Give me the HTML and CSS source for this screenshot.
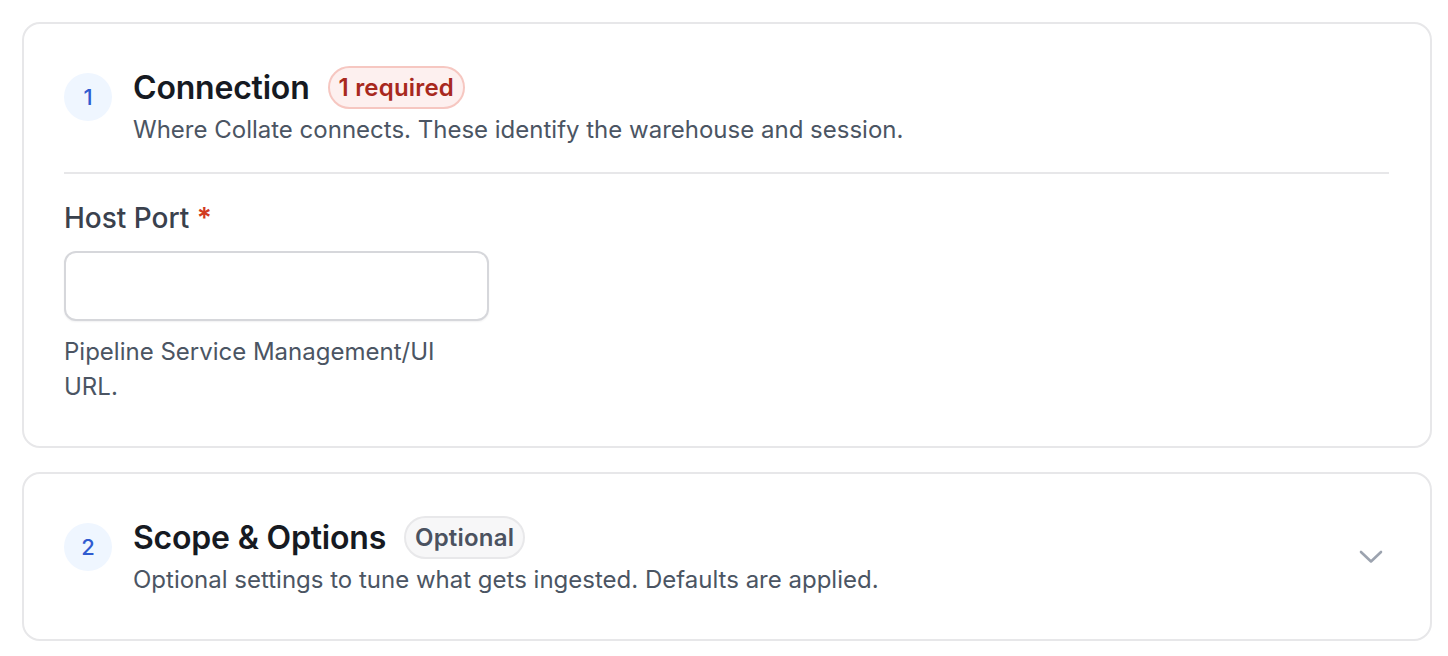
FILE: index.html
```html
<!DOCTYPE html>
<html>
<head>
<meta charset="utf-8">
<link rel="stylesheet" href="styles.css">
</head>
<body>
<div class="page">
  <section class="card">
    <div class="head">
      <div class="step">1</div>
      <div class="head-text">
        <div class="title-row">
          <h2 class="title">Connection</h2>
          <span class="badge badge-req">1 required</span>
        </div>
        <p class="sub">Where Collate connects. These identify the warehouse and session.</p>
      </div>
    </div>
    <hr class="divider">
    <div class="field">
      <label class="label">Host Port <span class="star">*</span></label>
      <input class="input" type="text">
      <p class="help">Pipeline Service Management/UI URL.</p>
    </div>
  </section>
  <section class="card">
    <div class="head">
      <div class="step">2</div>
      <div class="head-text">
        <div class="title-row">
          <h2 class="title">Scope &amp; Options</h2>
          <span class="badge badge-opt">Optional</span>
        </div>
        <p class="sub">Optional settings to tune what gets ingested. Defaults are applied.</p>
      </div>
      <div class="chev">
        <svg width="24" height="14" viewBox="0 0 24 14" fill="none"><path d="M2 2 L12 11.5 L22 2" stroke="#9ca3af" stroke-width="2.6" stroke-linecap="round" stroke-linejoin="round"/></svg>
      </div>
    </div>
  </section>
</div>
</body>
</html>
```

FILE: styles.css
```css
* { box-sizing: border-box; }
html, body { margin: 0; padding: 0; background: #fff; }
body { font-family: Inter, "Noto Sans", sans-serif; color: #111827; }
.page {
  padding: 22px 16px 16px 22px;
  display: flex;
  flex-direction: column;
  gap: 24px;
}
.card {
  border: 2px solid #e7e7e9;
  border-radius: 18px;
  padding: 42px 41px 42px 40px;
  background: #fff;
}
.head {
  display: flex;
  align-items: flex-start;
  gap: 21px;
}
.step {
  width: 48px;
  height: 48px;
  margin-top: 7px;
  border-radius: 50%;
  background: #eff6ff;
  color: #2f5bd0;
  font-size: 22px;
  font-weight: 500;
  display: flex;
  align-items: center;
  justify-content: center;
  flex: none;
}
.head-text { flex: 1; min-width: 0; }
.title-row {
  display: flex;
  align-items: center;
  gap: 18px;
  height: 43px;
}
.title {
  margin: 0;
  font-size: 32px;
  font-weight: 600;
  letter-spacing: -0.2px;
  color: #161a22;
}
.badge {
  display: inline-flex;
  align-items: center;
  height: 43px;
  padding: 0 9px;
  border-radius: 22px;
  font-size: 24px;
  font-weight: 600;
  letter-spacing: 0.2px;
}
.badge-req {
  background: #fdf0ef;
  border: 2px solid #f6c7c1;
  color: #a8291e;
}
.badge-opt {
  background: #f7f7f8;
  border: 2px solid #e8e8ea;
  color: #4b5260;
}
.sub {
  margin: 4px 0 0;
  font-size: 24px;
  line-height: 34px;
  color: #4b5563;
}
.divider {
  border: 0;
  border-top: 2px solid #e7e7e9;
  margin: 25px 0 0 0;
}
.field {
  display: flex;
  flex-direction: column;
}
.label {
  margin-top: 23px;
  font-size: 28px;
  line-height: 42px;
  font-weight: 500;
  color: #3a414d;
}
.star { color: #d13a22; font-weight: 600; }
.input {
  margin-top: 12px;
  width: 425px;
  height: 70px;
  border: 2px solid #d6d7db;
  border-radius: 12px;
  background: #fff;
  box-shadow: 0 1px 2px rgba(16,24,40,0.06);
  font: inherit;
  outline: none;
}
.help {
  margin: 13px 0 0;
  width: 425px;
  font-size: 24px;
  line-height: 35px;
  color: #4b5563;
}
.chev {
  align-self: center;
  width: 36px;
  display: flex;
  justify-content: center;
  flex: none;
}
```
